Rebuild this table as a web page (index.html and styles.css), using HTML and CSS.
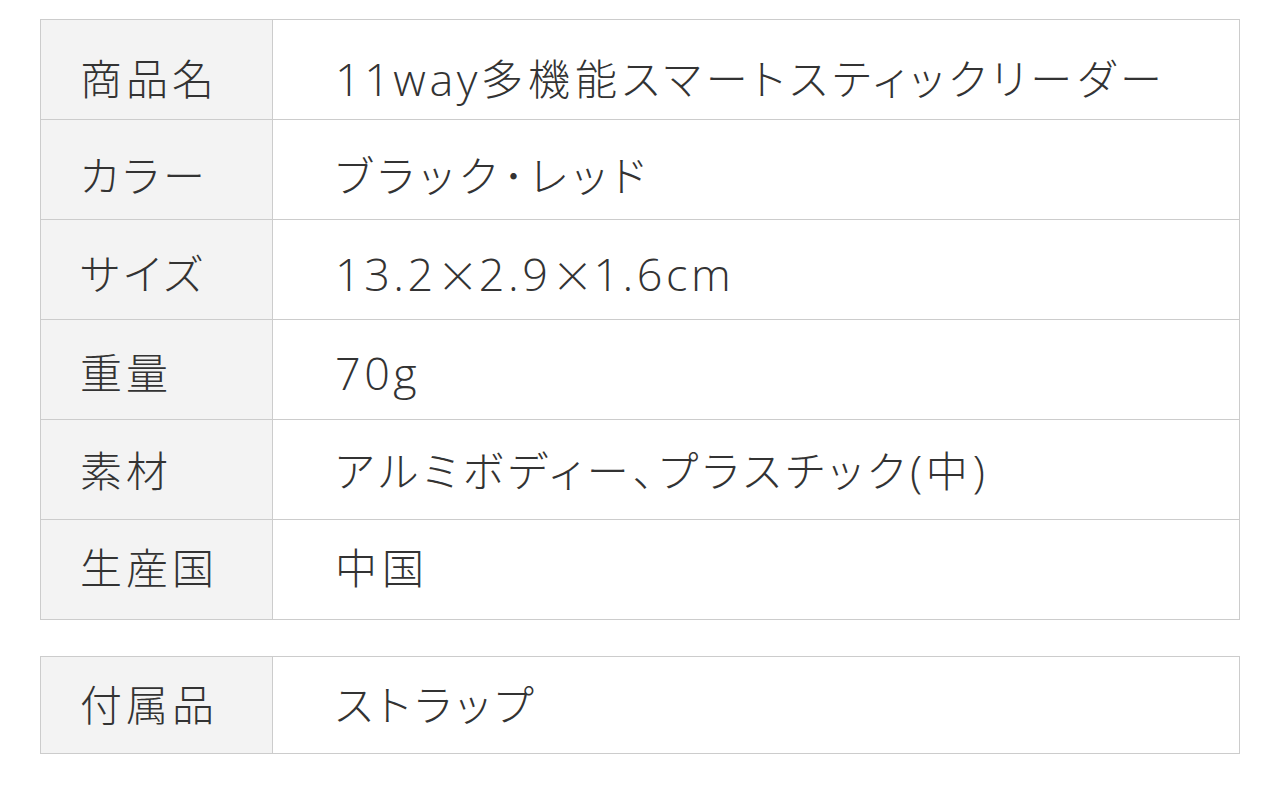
FILE: index.html
```html
<!DOCTYPE html>
<html lang="ja">
<head>
<meta charset="utf-8">
<title>商品仕様</title>
<link rel="stylesheet" href="styles.css">
</head>
<body>
<main class="page">
  <div class="spec">
    <div class="row r1"><div class="label">商品名</div><div class="value"><span class="lat">11way</span>多機能スマートスティックリーダー</div></div>
    <div class="row r2"><div class="label">カラー</div><div class="value wide">ブラック･レッド</div></div>
    <div class="row r3"><div class="label">サイズ</div><div class="value"><span class="lat">13.2</span><span class="cjk">×</span><span class="lat">2.9</span><span class="cjk">×</span><span class="lat">1.6cm</span></div></div>
    <div class="row r4"><div class="label">重量</div><div class="value"><span class="lat">70g</span></div></div>
    <div class="row r5"><div class="label">素材</div><div class="value">アルミボディー、プラスチック<span class="lat">(</span>中<span class="lat">)</span></div></div>
    <div class="row r6"><div class="label">生産国</div><div class="value">中国</div></div>
  </div>
  <div class="spec spec-small">
    <div class="row r7"><div class="label">付属品</div><div class="value">ストラップ</div></div>
  </div>
</main>
</body>
</html>
```
FILE: styles.css
```css
html, body {
  margin: 0;
  padding: 0;
  background: #ffffff;
}
.page {
  padding: 19px 40px 0;
  display: flex;
  flex-direction: column;
  gap: 36px;
  font-family: "Open Sans", "Noto Sans CJK JP", sans-serif;
  font-weight: 300;
  color: #333333;
  font-size: 42px;
  letter-spacing: 5px;
  font-feature-settings: "palt";
}
.lat {
  font-size: 45px;
  letter-spacing: 3.5px;
  line-height: 0;
}
.cjk {
  font-family: "Noto Sans CJK JP", sans-serif;
  font-feature-settings: normal;
  letter-spacing: 0;
  line-height: 0;
}
.spec {
  display: grid;
  grid-template-columns: 232px 1fr;
  border: 1px solid #cccccc;
  border-bottom: none;
}
.row {
  display: contents;
}
.label, .value {
  box-sizing: border-box;
  height: 100px;
  border-bottom: 1px solid #cccccc;
  display: flex;
  align-items: center;
  line-height: 1;
  white-space: nowrap;
}
.label {
  background: #f3f3f3;
  border-right: 1px solid #cccccc;
  padding-left: 39px;
  letter-spacing: 4px;
}
.value {
  padding-left: 62px;
}
.value.wide {
  letter-spacing: 6px;
}
.r1 > * { padding-top: 18px; }
.r2 > * { padding-top: 12px; }
.r3 > * { padding-top: 9px; }
.r4 > * { padding-top: 6px; }
.r5 > * { padding-top: 2px; }
.r6 > * { padding-bottom: 4px; }
.spec-small .label, .spec-small .value {
  height: 97px;
}
.r7 > * { padding-bottom: 0; }
```
